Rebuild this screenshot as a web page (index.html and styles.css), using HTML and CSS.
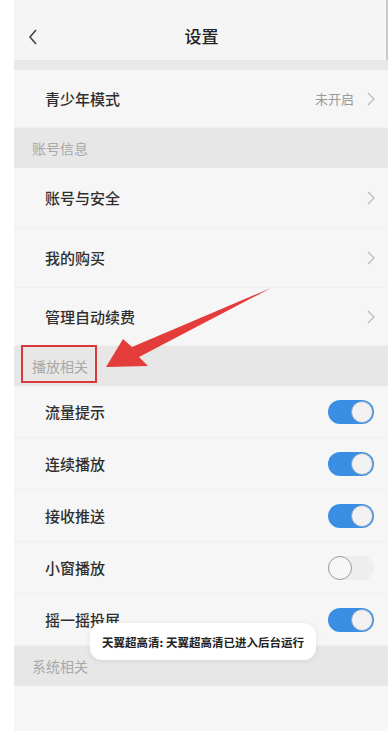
FILE: index.html
```html
<!DOCTYPE html>
<html lang="zh">
<head>
<meta charset="utf-8">
<link rel="stylesheet" href="styles.css">
</head>
<body>
<div class="screen">
  <header class="nav">
    <svg class="back" width="12" height="18" viewBox="0 0 12 18"><path d="M9 2 L3 9 L9 16" fill="none" stroke="#444" stroke-width="1.6"/></svg>
    <div class="title">设置</div>
  </header>
  <div class="gap"></div>
  <div class="row tall">
    <span class="label">青少年模式</span>
    <span class="value">未开启</span>
    <svg class="chev" width="10" height="16" viewBox="0 0 10 16"><path d="M2 2 L8 8 L2 14" fill="none" stroke="#bbb" stroke-width="1.3"/></svg>
  </div>
  <div class="section">账号信息</div>
  <div class="row acc">
    <span class="label">账号与安全</span>
    <svg class="chev" width="10" height="16" viewBox="0 0 10 16"><path d="M2 2 L8 8 L2 14" fill="none" stroke="#bbb" stroke-width="1.3"/></svg>
  </div>
  <div class="row acc">
    <span class="label">我的购买</span>
    <svg class="chev" width="10" height="16" viewBox="0 0 10 16"><path d="M2 2 L8 8 L2 14" fill="none" stroke="#bbb" stroke-width="1.3"/></svg>
  </div>
  <div class="row tall">
    <span class="label">管理自动续费</span>
    <svg class="chev" width="10" height="16" viewBox="0 0 10 16"><path d="M2 2 L8 8 L2 14" fill="none" stroke="#bbb" stroke-width="1.3"/></svg>
  </div>
  <div class="section hl">播放相关<span class="mark"></span></div>
  <div class="row sw"><span class="label">流量提示</span><span class="toggle on"></span></div>
  <div class="row sw"><span class="label">连续播放</span><span class="toggle on"></span></div>
  <div class="row sw"><span class="label">接收推送</span><span class="toggle on"></span></div>
  <div class="row sw"><span class="label">小窗播放</span><span class="toggle off"></span></div>
  <div class="row sw"><span class="label">摇一摇投屏</span><span class="toggle on"></span></div>
  <div class="section">系统相关</div>
  <div class="blank"></div>

  <svg class="arrow" width="390" height="731" viewBox="0 0 390 731">
    <polygon points="106,367 123,339 132,347 271,288 139,357 148,366" fill="#e43b3b"/>
  </svg>
  <div class="toast">天翼超高清: 天翼超高清已进入后台运行</div>
</div>
</body>
</html>
```
FILE: styles.css
```css
* { box-sizing: border-box; }
html, body { margin: 0; padding: 0; background: #ffffff; }
body { font-family: "Noto Sans CJK SC", "Noto Sans", sans-serif; }
.screen {
  position: relative;
  margin-left: 14px;
  width: 374px;
  height: 731px;
  background: #f6f6f6;
  overflow: hidden;
}
.nav {
  height: 60px;
  display: flex;
  align-items: center;
  justify-content: center;
  position: relative;
  background: #f5f5f5;
  border-right: 2px solid #c9c9c9;
}
.back { position: absolute; left: 13px; top: 28px; }
.title { font-size: 17px; color: #222; margin-top: 10px; margin-left: 3px; font-weight: 500; }
.gap { height: 10px; background: #e8e8e8; }
.row {
  display: flex;
  align-items: center;
  padding: 0 12px 0 31px;
  background: #f6f6f6;
  border-bottom: 1px solid #efefef;
}
.row.tall { height: 58px; }
.row.acc { height: 60px; }
.row.sw { height: 52px; padding-right: 14px; }
.label { font-size: 15px; color: #2e2e2e; flex: 1; font-weight: 500; }
.value { font-size: 13px; color: #999; margin-right: 12px; }
.chev { flex: none; }
.section {
  height: 40px;
  display: flex;
  align-items: center;
  padding-left: 18px;
  font-size: 14px;
  color: #a8a8a8;
  background: #e7e7e7;
  position: relative;
}
.mark {
  position: absolute;
  left: 7px;
  top: -1px;
  width: 76px;
  height: 38px;
  border: 2px solid #d83a3a;
}
.toggle {
  flex: none;
  width: 46px;
  height: 24px;
  border-radius: 12px;
  position: relative;
}
.toggle::after {
  content: "";
  position: absolute;
  top: 1px;
  width: 22px;
  height: 22px;
  border-radius: 50%;
  background: #f2f2f2;
  box-sizing: border-box;
}
.toggle.on { background: #3a8fe4; }
.toggle.on::after { right: 1px; border: 1px solid #8aa6c2; }
.toggle.off { background: #eeeeee; }
.toggle.off::after { left: 0; top: 0; width: 24px; height: 24px; border: 1px solid #9a9a9a; background: #f7f7f7; }
.blank { height: 46px; background: #f6f6f6; }
.arrow { position: absolute; left: -14px; top: 0; pointer-events: none; }
.toast {
  position: absolute;
  left: 76px;
  top: 623px;
  width: 226px;
  height: 37px;
  border-radius: 12px;
  background: #ffffff;
  box-shadow: 0 1px 6px rgba(0,0,0,0.08);
  display: flex;
  align-items: center;
  justify-content: center;
  font-size: 11.5px;
  font-weight: 700;
  color: #222;
}
```
